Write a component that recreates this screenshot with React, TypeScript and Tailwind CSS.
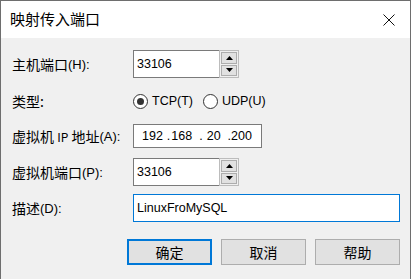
import React from "react";

// Win32-style "映射传入端口" dialog

const LATIN = "font-['Liberation_Sans',Arial,sans-serif]";
const CJK = "font-['Noto_Sans_CJK_SC','Noto_Sans_CJK_JP',sans-serif]";

function Label({ zh, hot }: { zh: React.ReactNode; hot?: string }) {
  return (
    <div className="w-[121px] shrink-0 flex items-center text-black">
      <span className={`${CJK} text-[14px] leading-none`}>{zh}</span>
      <span className={`${LATIN} text-[13px] leading-none`}>{hot}</span>
    </div>
  );
}

function Arrow({ up }: { up?: boolean }) {
  return (
    <svg width="7" height="4" viewBox="0 0 7 4">
      {up ? <polygon points="0,4 7,4 3.5,0" fill="#000" /> : <polygon points="0,0 7,0 3.5,4" fill="#000" />}
    </svg>
  );
}

function Spin({ value }: { value: string }) {
  return (
    <div className="flex h-[28px] w-[106px]">
      <div className={`flex-1 flex items-center pl-[3px] bg-white border border-r-0 border-[#7a7a7a] ${LATIN} text-[12.5px] text-black`}>
        {value}
      </div>
      <div className="w-[20px] flex flex-col gap-px p-px bg-[#f0f0f0] border border-[#bcbcbc]">
        <div className="flex-1 flex items-center justify-center bg-[#e1e1e1] border border-[#adadad]">
          <Arrow up />
        </div>
        <div className="flex-1 flex items-center justify-center bg-[#e1e1e1] border border-[#adadad]">
          <Arrow />
        </div>
      </div>
    </div>
  );
}

function Radio({ label, checked }: { label: string; checked?: boolean }) {
  return (
    <div className="flex items-center">
      <div className="w-[15px] h-[15px] rounded-full border border-[#333] bg-white flex items-center justify-center">
        {checked && <div className="w-[7px] h-[7px] rounded-full bg-[#333]" />}
      </div>
      <span className={`ml-[4px] ${LATIN} text-[12.5px] text-black`}>{label}</span>
    </div>
  );
}

function Button({ text, primary }: { text: string; primary?: boolean }) {
  return (
    <div
      className={`w-[85px] h-[26px] flex items-center justify-center bg-[#e1e1e1] ${CJK} text-[14px] text-black ${
        primary ? "border-2 border-[#0078d7]" : "border border-[#adadad]"
      }`}
    >
      {text}
    </div>
  );
}

export default function App() {
  return (
    <div className="w-[411px] h-[279px] flex flex-col bg-[#f0f0f0] border-x border-t border-[#6e6e6e] overflow-hidden">
      {/* title bar */}
      <div className="h-[37px] shrink-0 bg-white flex items-center pl-[9px] pr-[15px]">
        <span className={`${CJK} text-[15px] text-black`}>映射传入端口</span>
        <svg className="ml-auto" width="12" height="12" viewBox="0 0 12 12">
          <path d="M0.5 0.5 L11.5 11.5 M11.5 0.5 L0.5 11.5" stroke="#111" strokeWidth="1" />
        </svg>
      </div>

      {/* body */}
      <div className="flex flex-col pl-[11px] pr-[10px] pt-[12px]">
        <div className="flex h-[28px]">
          <Label zh="主机端口" hot="(H):" />
          <Spin value="33106" />
        </div>

        <div className="flex h-[22px] mt-[12px]">
          <Label zh="类型:" />
          <div className="flex items-center gap-[10px]">
            <Radio label="TCP(T)" checked />
            <Radio label="UDP(U)" />
          </div>
        </div>

        <div className="flex h-[24px] mt-[12px]">
          <Label
            zh={
              <>
                虚拟机 <span className="text-[12px]">IP</span> 地址
              </>
            }
            hot="(A):"
          />
          <div className={`w-[129px] flex items-center bg-white border border-[#7a7a7a] ${LATIN} text-[12.5px] text-black`}>
            <span className="ml-[8px]">192</span>
            <span className="ml-[4px]">.</span>
            <span className="ml-[1px]">168</span>
            <span className="ml-[7px]">.</span>
            <span className="ml-[4px]">20</span>
            <span className="ml-[7px]">.</span>
            <span>200</span>
          </div>
        </div>

        <div className="flex h-[28px] mt-[10px]">
          <Label zh="虚拟机端口" hot="(P):" />
          <Spin value="33106" />
        </div>

        <div className="flex h-[28px] mt-[8px]">
          <Label zh="描述" hot="(D):" />
          <div className={`flex-1 flex items-center pl-[3px] bg-white border border-[#0078d7] ${LATIN} text-[12.5px] text-black`}>
            LinuxFroMySQL
          </div>
        </div>

        <div className="flex justify-end gap-[9px] mt-[17px]">
          <Button text="确定" primary />
          <Button text="取消" />
          <Button text="帮助" />
        </div>
      </div>
    </div>
  );
}
